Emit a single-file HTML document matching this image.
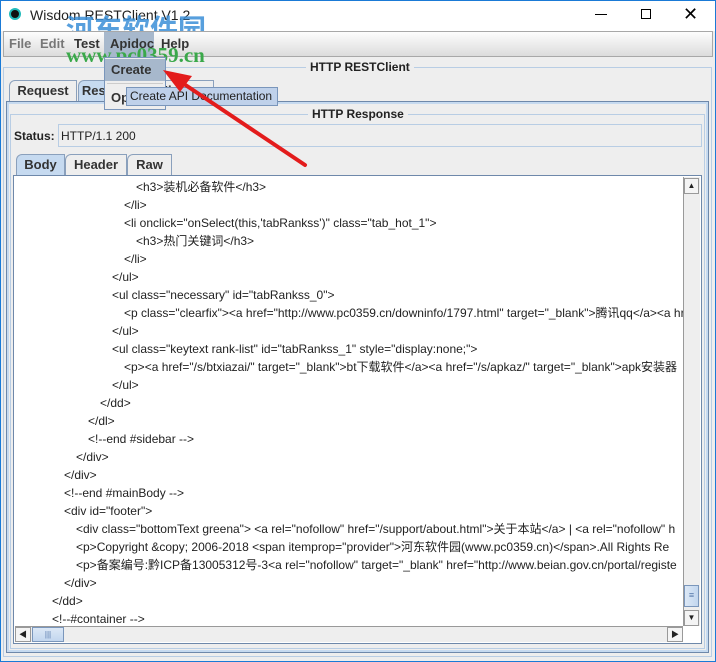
<!DOCTYPE html>
<html><head><meta charset="utf-8"><style>
*{box-sizing:border-box;margin:0;padding:0}
body{width:716px;height:662px;position:relative;overflow:hidden;background:#eeeeee;font-family:"Liberation Sans","Noto Sans CJK SC",sans-serif;font-size:12px;color:#222}
.a{position:absolute}
.win{left:0;top:0;width:716px;height:662px;border:1px solid #1a7ad6;border-top:1px solid #1a7ad6}
.title{left:1px;top:1px;width:714px;height:30px;background:#fff}
.menubar{left:3px;top:31px;width:710px;height:26px;background:linear-gradient(#fdfdfd,#dcdcdc);border:1px solid #a8a8a8}
.mi{top:36px;font-size:13px;font-weight:bold;color:#333}
.tab{height:21px;border:1px solid #8aa0bc;border-bottom:none;border-radius:6px 0 0 0;background:#eee;font-weight:bold;font-size:13px;text-align:center;line-height:20px;color:#333}
.tab.sel{background:#c6daf0}
.code{left:15px;top:177px;width:668px;height:449px;background:#fff;overflow:hidden}
.ln{position:absolute;white-space:nowrap;font-size:12px;color:#222;line-height:14px}
</style></head><body>
<div class="a win"></div>
<div class="a title"></div>
<div class="a" style="left:9px;top:8px;width:12px;height:12px;border-radius:50%;background:#111;border:2px solid #2bb"></div>
<div class="a" style="left:30px;top:7px;font-size:14px;color:#222">Wisdom RESTClient V1.2</div>
<div class="a" style="left:66px;top:12px;font-size:28px;font-weight:bold;color:#3a8fd8;opacity:.85;font-family:'Noto Sans CJK SC',sans-serif;line-height:32px">河东软件园</div>
<div class="a" style="left:595px;top:14px;width:12px;height:1px;background:#000"></div>
<div class="a" style="left:641px;top:9px;width:10px;height:10px;border:1px solid #000"></div>
<div class="a" style="left:683px;top:4px;font-size:18px;color:#000">✕</div>
<div class="a menubar"></div>
<div class="a mi" style="left:9px;color:#777">File</div>
<div class="a mi" style="left:40px;color:#777">Edit</div>
<div class="a mi" style="left:74px">Test</div>
<div class="a" style="left:104px;top:32px;width:50px;height:25px;background:#a7b8cc"></div>
<div class="a mi" style="left:110px">Apidoc</div>
<div class="a mi" style="left:161px">Help</div>
<div class="a" style="left:66px;top:43px;font-size:21px;font-weight:bold;color:#3aa84a;font-family:'Liberation Serif',serif">www.pc0359.cn</div>
<div class="a" style="left:3px;top:67px;width:709px;height:590px;border:1px solid #b8cde4"></div>
<div class="a" style="left:306px;top:60px;background:#eee;padding:0 4px;font-weight:bold;font-size:12px">HTTP RESTClient</div>
<div class="a tab" style="left:9px;top:80px;width:68px">Request</div>
<div class="a tab sel" style="left:78px;top:80px;width:70px">Response</div>
<div class="a tab" style="left:148px;top:80px;width:66px">History</div>
<div class="a" style="left:6px;top:101px;width:703px;height:552px;border:1px solid #6e88aa;box-shadow:inset 0 0 0 2px #c6daf0"></div>
<div class="a" style="left:10px;top:114px;width:695px;height:535px;border:1px solid #b8cde4"></div>
<div class="a" style="left:308px;top:107px;background:#eee;padding:0 4px;font-weight:bold;font-size:12px">HTTP Response</div>
<div class="a" style="left:14px;top:129px;font-weight:bold;font-size:12px">Status:</div>
<div class="a" style="left:58px;top:124px;width:644px;height:23px;border:1px solid #b8cde4;padding:4px 2px;font-size:12px">HTTP/1.1 200</div>
<div class="a tab sel" style="left:16px;top:154px;width:49px">Body</div>
<div class="a tab" style="left:65px;top:154px;width:62px">Header</div>
<div class="a tab" style="left:127px;top:154px;width:45px">Raw</div>
<div class="a" style="left:13px;top:175px;width:689px;height:469px;border:1px solid #6e88aa;background:#fff"></div>
<div class="a code">
<div class="ln" style="left:121px;top:3px">&lt;h3&gt;装机必备软件&lt;/h3&gt;</div>
<div class="ln" style="left:109px;top:21px">&lt;/li&gt;</div>
<div class="ln" style="left:109px;top:39px">&lt;li onclick="onSelect(this,'tabRankss')" class="tab_hot_1"&gt;</div>
<div class="ln" style="left:121px;top:57px">&lt;h3&gt;热门关键词&lt;/h3&gt;</div>
<div class="ln" style="left:109px;top:75px">&lt;/li&gt;</div>
<div class="ln" style="left:97px;top:93px">&lt;/ul&gt;</div>
<div class="ln" style="left:97px;top:111px">&lt;ul class="necessary" id="tabRankss_0"&gt;</div>
<div class="ln" style="left:109px;top:129px">&lt;p class="clearfix"&gt;&lt;a href="http://www.pc0359.cn/downinfo/1797.html" target="_blank"&gt;腾讯qq&lt;/a&gt;&lt;a href</div>
<div class="ln" style="left:97px;top:147px">&lt;/ul&gt;</div>
<div class="ln" style="left:97px;top:165px">&lt;ul class="keytext rank-list" id="tabRankss_1" style="display:none;"&gt;</div>
<div class="ln" style="left:109px;top:183px">&lt;p&gt;&lt;a href="/s/btxiazai/" target="_blank"&gt;bt下载软件&lt;/a&gt;&lt;a href="/s/apkaz/" target="_blank"&gt;apk安装器</div>
<div class="ln" style="left:97px;top:201px">&lt;/ul&gt;</div>
<div class="ln" style="left:85px;top:219px">&lt;/dd&gt;</div>
<div class="ln" style="left:73px;top:237px">&lt;/dl&gt;</div>
<div class="ln" style="left:73px;top:255px">&lt;!--end #sidebar --&gt;</div>
<div class="ln" style="left:61px;top:273px">&lt;/div&gt;</div>
<div class="ln" style="left:49px;top:291px">&lt;/div&gt;</div>
<div class="ln" style="left:49px;top:309px">&lt;!--end #mainBody --&gt;</div>
<div class="ln" style="left:49px;top:327px">&lt;div id="footer"&gt;</div>
<div class="ln" style="left:61px;top:345px">&lt;div class="bottomText greena"&gt; &lt;a rel="nofollow" href="/support/about.html"&gt;关于本站&lt;/a&gt; | &lt;a rel="nofollow" h</div>
<div class="ln" style="left:61px;top:363px">&lt;p&gt;Copyright &amp;copy; 2006-2018 &lt;span itemprop="provider"&gt;河东软件园(www.pc0359.cn)&lt;/span&gt;.All Rights Re</div>
<div class="ln" style="left:61px;top:381px">&lt;p&gt;备案编号:黔ICP备13005312号-3&lt;a rel="nofollow" target="_blank" href="http://www.beian.gov.cn/portal/registe</div>
<div class="ln" style="left:49px;top:399px">&lt;/div&gt;</div>
<div class="ln" style="left:37px;top:417px">&lt;/dd&gt;</div>
<div class="ln" style="left:37px;top:435px">&lt;!--#container --&gt;</div>
</div>
<div class="a" style="left:683px;top:177px;width:17px;height:449px;background:#eee;border-left:1px solid #999"></div>
<div class="a" style="left:684px;top:178px;width:15px;height:16px;border:1px solid #999;background:#f4f4f4;text-align:center;font-size:8px;line-height:14px">▲</div>
<div class="a" style="left:684px;top:585px;width:15px;height:22px;border:1px solid #7a96bb;background:linear-gradient(90deg,#dce8f6,#c2d6ee);text-align:center;font-size:9px;line-height:19px;color:#5577aa">≡</div>
<div class="a" style="left:684px;top:610px;width:15px;height:16px;border:1px solid #999;background:#f4f4f4;text-align:center;font-size:8px;line-height:14px">▼</div>
<div class="a" style="left:15px;top:626px;width:668px;height:16px;background:#eee;border-top:1px solid #999"></div>
<div class="a" style="left:15px;top:627px;width:16px;height:15px;border:1px solid #999;background:#f4f4f4;font-size:8px;line-height:13px;text-align:center">◀</div>
<div class="a" style="left:32px;top:627px;width:32px;height:15px;border:1px solid #7a96bb;background:linear-gradient(#dce8f6,#c2d6ee);font-size:8px;line-height:13px;text-align:center;color:#5577aa">|||</div>
<div class="a" style="left:667px;top:627px;width:16px;height:15px;border:1px solid #999;background:#f4f4f4;font-size:8px;line-height:13px;text-align:center">▶</div>
<div class="a" style="left:104px;top:57px;width:62px;height:53px;background:#eee;border:1px solid #7a96bb"></div>
<div class="a" style="left:105px;top:59px;width:60px;height:22px;background:#a7b8cc"></div>
<div class="a" style="left:111px;top:62px;font-size:13px;font-weight:bold;color:#333">Create</div>
<div class="a" style="left:107px;top:83px;width:56px;height:1px;background:#ccc"></div>
<div class="a" style="left:111px;top:90px;font-size:13px;font-weight:bold;color:#333">Op</div>
<div class="a" style="left:126px;top:87px;width:152px;height:19px;background:#bfd1ea;border:1px solid #7a96bb;font-size:12px;padding:1px 3px;color:#222">Create API Documentation</div>
<svg class="a" style="left:0;top:0" width="716" height="662"><line x1="305" y1="165" x2="178" y2="80" stroke="#e31c1c" stroke-width="4" stroke-linecap="round"/><polygon points="163,70 192,76 180,92" fill="#e31c1c"/></svg>
</body></html>
